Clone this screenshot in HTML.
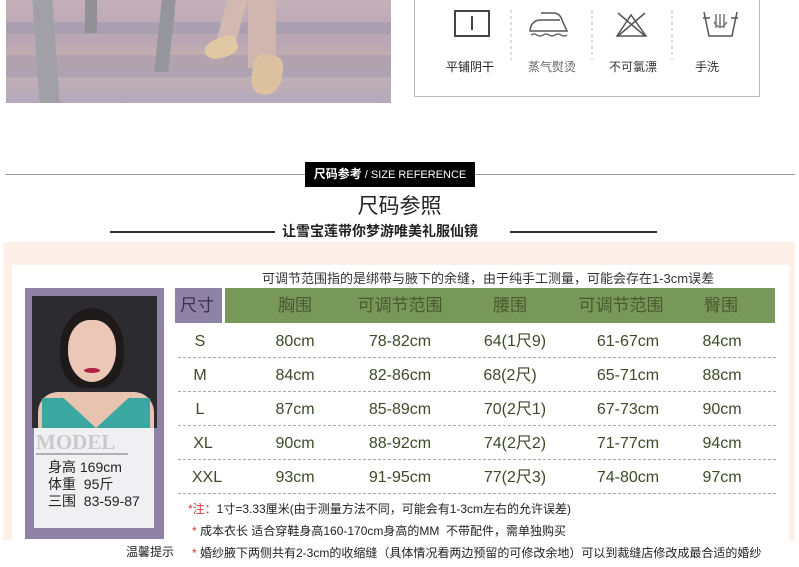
<!DOCTYPE html>
<html><head><meta charset="utf-8"><style>
*{margin:0;padding:0;box-sizing:border-box}
body{width:799px;height:567px;background:#fff;position:relative;overflow:hidden;font-family:"Liberation Sans","Noto Sans CJK SC",sans-serif;color:#333}
.a{position:absolute}
.cj{font-family:"Liberation Sans","Noto Sans CJK SC",sans-serif}
.row{position:absolute;left:175px;width:600px;height:34px;font-size:16px;color:#3d4a2a;font-family:"Liberation Sans","Noto Sans CJK SC",sans-serif}
.row span{position:absolute;top:7px;line-height:18px;height:18px;transform:translateX(-50%);white-space:nowrap}
.dl{position:absolute;left:178px;width:598px;border-top:1px dashed #aaa}
.hd{position:absolute;top:8px;font-size:17px;line-height:20px;color:#4a5a30;transform:translateX(-50%);white-space:nowrap}
</style></head><body>
<!-- top photo -->
<div class="a" style="left:6px;top:0;width:385px;height:103px;background:linear-gradient(180deg,#c4b0b8 0%,#b8a6b4 40%,#c8b0b0 60%,#b4aabb 100%)"></div>
<div class="a" style="left:6px;top:22px;width:385px;height:12px;background:#9a94ad;opacity:.5"></div>
<div class="a" style="left:6px;top:55px;width:385px;height:22px;background:#9a94ad;opacity:.45"></div>
<div class="a" style="left:36px;top:0;width:20px;height:103px;background:#a0a0a6;transform:skewX(4deg)"></div>
<div class="a" style="left:85px;top:0;width:12px;height:33px;background:#909096"></div>
<div class="a" style="left:158px;top:0;width:14px;height:72px;background:#95969c;transform:skewX(-6deg)"></div>
<div class="a" style="left:222px;top:0;width:20px;height:40px;background:#d2b8b0;transform:skewX(-15deg)"></div>
<div class="a" style="left:204px;top:38px;width:34px;height:20px;background:#e0c8a4;border-radius:50% 30% 40% 60%;transform:rotate(-20deg)"></div>
<div class="a" style="left:248px;top:0;width:28px;height:68px;background:#d0b6ae"></div>
<div class="a" style="left:252px;top:55px;width:30px;height:40px;background:#dcc2a0;border-radius:30% 30% 50% 40%;transform:rotate(8deg)"></div>
<!-- care box -->
<div class="a" style="left:414px;top:-2px;width:346px;height:99px;border:1px solid #bbb;border-top:none"></div>
<svg class="a" style="left:414px;top:0" width="346" height="60" viewBox="0 0 346 60">
<rect x="41" y="11" width="34" height="25" fill="none" stroke="#444" stroke-width="2"/>
<line x1="58" y1="16" x2="58" y2="30" stroke="#444" stroke-width="2"/>
<line x1="97" y1="10" x2="97" y2="60" stroke="#bbb" stroke-dasharray="3,3"/>
<line x1="178" y1="10" x2="178" y2="60" stroke="#bbb" stroke-dasharray="3,3"/>
<line x1="258" y1="10" x2="258" y2="60" stroke="#bbb" stroke-dasharray="3,3"/>
<path d="M127 13 H139 Q146 13 148 20 L153 31 H116 Q117 20 127 20 H146" fill="none" stroke="#555" stroke-width="1.5"/>
<path d="M117 35 q3 -2 6 0 t6 0 t6 0 t6 0 t6 0 t6 0" fill="none" stroke="#555" stroke-width="1.3"/>
<path d="M204 13 L231 36 M231 13 L204 36 M217 15 L203 36 H232 Z" fill="none" stroke="#555" stroke-width="1.5"/>
<path d="M290 12 L295 36 H318 L323 12 M289 18 H296 M317 18 H324" fill="none" stroke="#555" stroke-width="1.5"/>
<path d="M302 14 v14 M306 14 v14 M310 14 v14 M300 22 q6 10 13 0" fill="none" stroke="#777" stroke-width="1.5"/>
</svg>
<div class="a cj" style="left:446px;top:58px;font-size:12px;color:#222">平铺阴干</div>
<div class="a cj" style="left:528px;top:58px;font-size:12px;color:#666">蒸气熨烫</div>
<div class="a cj" style="left:609px;top:58px;font-size:12px;color:#333">不可氯漂</div>
<div class="a cj" style="left:695px;top:58px;font-size:12px;color:#333">手洗</div>
<!-- section title -->
<div class="a" style="left:5px;top:174px;width:790px;border-top:1px solid #999"></div>
<div class="a" style="left:305px;top:162px;width:170px;height:25px;background:#000;color:#fff;font-size:11px;line-height:25px;text-align:center"><b style="font-size:12px">尺码参考</b> / SIZE REFERENCE</div>
<div class="a cj" style="left:0;width:799px;top:190px;text-align:center;font-size:21px;color:#222">尺码参照</div>
<div class="a" style="left:110px;top:231px;width:165px;border-top:2px solid #333"></div>
<div class="a" style="left:510px;top:231px;width:147px;border-top:2px solid #333"></div>
<div class="a cj" style="left:282px;top:221px;font-size:14px;color:#222;font-weight:bold">让雪宝莲带你梦游唯美礼服仙镜</div>
<!-- pink panel -->
<div class="a" style="left:3px;top:242px;width:792px;height:300px;background:#fdf0e8"></div>
<div class="a" style="left:12px;top:265px;width:777px;height:280px;background:#fff"></div>
<div class="a" style="left:0;top:540px;width:799px;height:27px;background:#fff"></div>
<div class="a cj" style="left:262px;top:268px;font-size:13px;color:#333">可调节范围指的是绑带与腋下的余缝，由于纯手工测量，可能会存在1-3cm误差</div>
<!-- model -->
<div class="a" style="left:25px;top:288px;width:139px;height:251px;background:#8e83a6"></div>
<div class="a" style="left:32px;top:296px;width:125px;height:132px;background:#2b2b30"></div>
<div class="a" style="left:60px;top:308px;width:64px;height:80px;background:#1e1a1a;border-radius:50% 50% 40% 40%"></div>
<div class="a" style="left:68px;top:320px;width:48px;height:62px;background:#ecc7b8;border-radius:45% 45% 50% 50%"></div>
<div class="a" style="left:84px;top:368px;width:16px;height:5px;background:#b02040;border-radius:50%"></div>
<div class="a" style="left:38px;top:392px;width:116px;height:36px;background:#e8c4b0;border-radius:20px 20px 0 0"></div>
<div class="a" style="left:42px;top:398px;width:108px;height:30px;background:#3aa8a0;clip-path:polygon(0 0,20% 0,50% 100%,80% 0,100% 0,100% 100%,0 100%)"></div>
<div class="a" style="left:34px;top:428px;width:120px;height:100px;background:#f0f0f2"></div>
<div class="a" style="left:36px;top:430px;font-family:'Liberation Serif',serif;font-size:21px;font-weight:bold;color:#c9c9c9">MODEL</div>
<div class="a" style="left:36px;top:453px;width:92px;border-top:2px solid #b0b0b0"></div>
<div class="a cj" style="left:48px;top:459px;font-size:14px;line-height:17px;color:#222">身高 169cm<br>体重 &nbsp;95斤<br>三围 &nbsp;83-59-87</div>
<!-- table header -->
<div class="a" style="left:175px;top:288px;width:47px;height:35px;background:#8e83a6"></div>
<div class="a" style="left:225px;top:288px;width:550px;height:35px;background:#78985a"></div>
<div class="hd cj" style="left:197px;color:#3a3050;top:296px">尺寸</div>
<div class="hd cj" style="left:295px;top:296px">胸围</div>
<div class="hd cj" style="left:400px;top:296px">可调节范围</div>
<div class="hd cj" style="left:510px;top:296px">腰围</div>
<div class="hd cj" style="left:621px;top:296px">可调节范围</div>
<div class="hd cj" style="left:721px;top:296px">臀围</div>
<div class="row" style="top:326px"><span style="left:25px">S</span><span style="left:120px">80cm</span><span style="left:225px">78-82cm</span><span style="left:340px">64(1尺9)</span><span style="left:453px">61-67cm</span><span style="left:547px">84cm</span></div>
<div class="row" style="top:360px"><span style="left:25px">M</span><span style="left:120px">84cm</span><span style="left:225px">82-86cm</span><span style="left:335px">68(2尺)</span><span style="left:453px">65-71cm</span><span style="left:547px">88cm</span></div>
<div class="row" style="top:394px"><span style="left:25px">L</span><span style="left:120px">87cm</span><span style="left:225px">85-89cm</span><span style="left:340px">70(2尺1)</span><span style="left:453px">67-73cm</span><span style="left:547px">90cm</span></div>
<div class="row" style="top:428px"><span style="left:28px">XL</span><span style="left:120px">90cm</span><span style="left:225px">88-92cm</span><span style="left:340px">74(2尺2)</span><span style="left:453px">71-77cm</span><span style="left:547px">94cm</span></div>
<div class="row" style="top:462px"><span style="left:32px">XXL</span><span style="left:120px">93cm</span><span style="left:225px">91-95cm</span><span style="left:340px">77(2尺3)</span><span style="left:453px">74-80cm</span><span style="left:547px">97cm</span></div>
<div class="dl" style="top:357px"></div><div class="dl" style="top:391px"></div><div class="dl" style="top:425px"></div><div class="dl" style="top:459px"></div><div class="dl" style="top:493px"></div>
<div class="a cj" style="left:188px;top:500px;font-size:12px;color:#222"><span style="color:#d33">*注：</span>1寸=3.33厘米(由于测量方法不同，可能会有1-3cm左右的允许误差)</div>
<div class="a cj" style="left:192px;top:522px;font-size:12px;color:#222"><span style="color:#d33">*</span> 成本衣长 适合穿鞋身高160-170cm身高的MM &nbsp;不带配件，需单独购买</div>
<div class="a cj" style="left:126px;top:543px;font-size:12px;color:#222">温馨提示</div>
<div class="a cj" style="left:192px;top:544px;font-size:12px;color:#222;white-space:nowrap"><span style="color:#d33">*</span> 婚纱腋下两侧共有2-3cm的收缩缝（具体情况看两边预留的可修改余地）可以到裁缝店修改成最合适的婚纱</div>
</body></html>
